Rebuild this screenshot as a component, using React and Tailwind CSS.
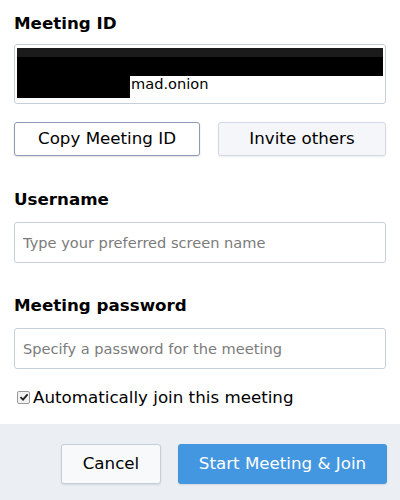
import React from 'react';

const font = { fontFamily: '"DejaVu Sans", "Liberation Sans", sans-serif' };

const App = () => {
    return (
        <div className="w-[400px] h-[500px] bg-white text-black flex flex-col" style={font}>
            <div className="flex-1 px-[14px] pt-[11px] flex flex-col">
                <h2 className="text-[16.7px] font-bold leading-[24px]">Meeting ID</h2>

                <div className="mt-[9px] h-[60px] border border-[#c5cfdc] rounded-[3px] pt-[3px] pl-[2px] pr-[2px] pb-[5px] flex flex-col">
                    <div className="h-[9px] bg-[#1b1b1b]"></div>
                    <div className="h-[19px] bg-black"></div>
                    <div className="flex h-[22px]">
                        <div className="w-[113px] bg-black"></div>
                        <span className="text-[14.6px] leading-[16px] pl-px">mad.onion</span>
                    </div>
                </div>

                <div className="mt-[18px] flex gap-[18px]">
                    <button className="w-[186px] h-[34px] border border-[#8d9cb2] rounded-[3px] bg-white text-[16.7px] shadow-[0_1px_2px_rgba(0,0,0,0.12)]">
                        Copy Meeting ID
                    </button>
                    <button className="flex-1 h-[34px] border border-[#d2d9e3] rounded-[3px] bg-[#f4f6f9] text-[16.7px] shadow-[0_1px_2px_rgba(0,0,0,0.08)]">
                        Invite others
                    </button>
                </div>

                <h2 className="mt-[31px] text-[16.7px] font-bold leading-[24px]">Username</h2>
                <input
                    className="mt-[11px] h-[41px] border border-[#c5cfdc] rounded-[3px] px-[8px] text-[14.6px] outline-none placeholder:text-[#7b7b7b]"
                    placeholder="Type your preferred screen name"
                />

                <h2 className="mt-[30px] text-[16.7px] font-bold leading-[24px]">Meeting password</h2>
                <input
                    className="mt-[11px] h-[41px] border border-[#c5cfdc] rounded-[3px] px-[8px] text-[14.6px] outline-none placeholder:text-[#7b7b7b]"
                    placeholder="Specify a password for the meeting"
                />

                <label className="mt-[16px] flex items-center gap-[3px] pl-[3px] text-[16.7px] leading-[24px]">
                    <span className="w-[13px] h-[13px] border border-[#9a9a9a] rounded-[2px] bg-[#f2f2f2] flex items-center justify-center">
                        <svg width="10" height="10" viewBox="0 0 10 10">
                            <path d="M1.5 5.2 L4 7.6 L8.6 2.4" fill="none" stroke="#222" strokeWidth="1.8" />
                        </svg>
                    </span>
                    Automatically join this meeting
                </label>
            </div>

            <div className="h-[76px] bg-[#ebeff4] flex items-start pt-[20px] justify-end gap-[17px] px-[13px]">
                <button className="w-[100px] h-[40px] border border-[#c6cedb] rounded-[3px] bg-[#f8f9fb] text-[16.7px] shadow-[0_1px_2px_rgba(0,0,0,0.1)]">
                    Cancel
                </button>
                <button className="w-[209px] h-[40px] rounded-[3px] bg-[#4397e0] text-white text-[16.7px] shadow-[0_1px_2px_rgba(0,0,0,0.1)]">
                    Start Meeting &amp; Join
                </button>
            </div>
        </div>
    );
};

export default App;
